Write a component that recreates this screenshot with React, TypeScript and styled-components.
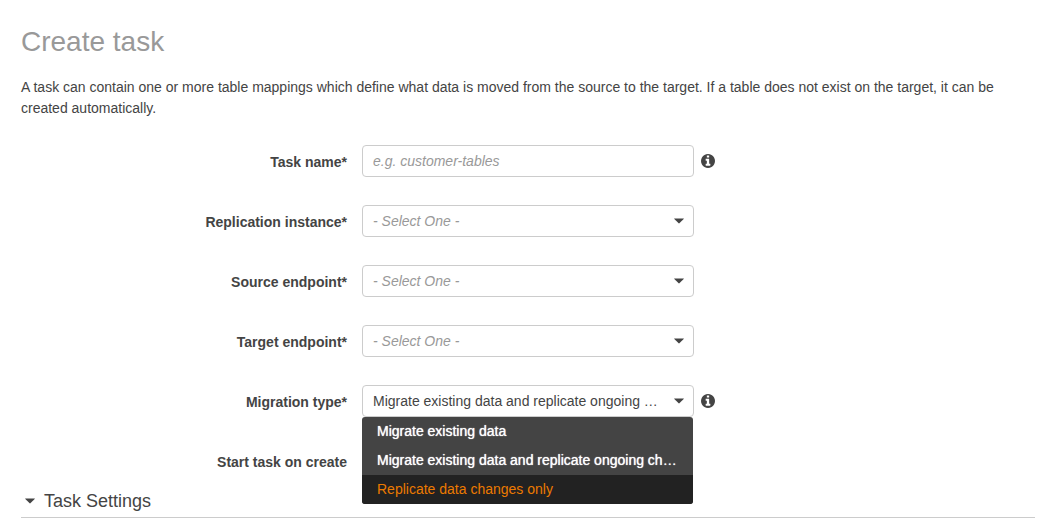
import React, { useState } from "react";
import styled, { createGlobalStyle } from "styled-components";

const GlobalStyle = createGlobalStyle`
  *, *::before, *::after { box-sizing: border-box; }
  body {
    margin: 0;
    background: #fff;
    color: #444;
    font: 14px/21px "Helvetica Neue", "Liberation Sans", Arial, sans-serif;
  }
`;

const Page = styled.main`
  padding: 24px 16px 14px 21px;
`;

const Title = styled.h1`
  margin: 0 0 18px;
  color: #999;
  font-size: 28px;
  font-weight: 400;
  line-height: 35px;
`;

const Intro = styled.p`
  margin: 0 0 26px;
`;

const Form = styled.form`
  display: grid;
  gap: 28px;
`;

const Row = styled.div`
  display: grid;
  grid-template-columns: 326px minmax(0, 332px) auto;
  justify-content: start;
  align-items: center;
  min-height: 32px;
`;

const Label = styled.label`
  padding-top: 2px;
  font-weight: 700;
  text-align: right;
`;

const Control = styled.div`
  position: relative;
  display: flex;
  align-items: center;
  margin: 0 -15px 0 15px;
`;

const fieldStyle = `
  width: 100%;
  height: 32px;
  margin: 0;
  border: 1px solid #ccc;
  border-radius: 4px;
  background: #fff;
  font: inherit;
  outline: none;
`;

const TextInput = styled.input`
  ${fieldStyle}
  padding: 0 10px;
  color: #444;
  &::placeholder {
    color: #999;
    font-style: italic;
    opacity: 1;
  }
`;

const Select = styled.select<{ $empty?: boolean }>`
  ${fieldStyle}
  appearance: none;
  padding: 0 30px 0 10px;
  overflow: hidden;
  white-space: nowrap;
  text-overflow: ellipsis;
  color: ${(p) => (p.$empty ? "#999" : "#444")};
  font-style: ${(p) => (p.$empty ? "italic" : "normal")};
`;

const SelectCaret = styled.span`
  position: absolute;
  right: 10px;
  top: 0;
  height: 32px;
  display: flex;
  align-items: center;
  pointer-events: none;
`;

const InfoButton = styled.button`
  display: flex;
  margin-left: 22px;
  padding: 0;
  border: 0;
  background: none;
  color: #444;
`;

const Menu = styled.ul`
  position: absolute;
  z-index: 1;
  top: 100%;
  left: 0;
  right: 1px;
  margin: 0;
  padding: 0;
  overflow: hidden;
  border-radius: 3px;
  background: #444;
  list-style: none;
`;

const MenuItem = styled.li<{ $active: boolean }>`
  padding: 4px 12px 4px 15px;
  overflow: hidden;
  white-space: nowrap;
  text-overflow: ellipsis;
  cursor: pointer;
  color: ${(p) => (p.$active ? "#ec7a00" : "#fff")};
  background: ${(p) => (p.$active ? "#222" : "transparent")};
  text-shadow: ${(p) => (p.$active ? "none" : "0 0 1px #fff")};
`;

const Checkbox = styled.input`
  margin: 0;
`;

const SectionHeading = styled.h2`
  margin: 12px 0 0;
  border-bottom: 1px solid #ccc;
  font-size: 18px;
  font-weight: 400;
  line-height: 24px;
`;

const SectionToggle = styled.button`
  display: flex;
  align-items: center;
  gap: 9px;
  padding: 0 0 4px 4px;
  border: 0;
  background: none;
  color: inherit;
  font: inherit;
`;

function Caret() {
  return (
    <svg width="10" height="6" viewBox="0 0 10 6" aria-hidden="true">
      <path d="M.5 .4h9q.6 0 .2.6L5.6 5.1q-.6.6-1.2 0L.3 1Q-.1.4.5.4z" fill="#444" />
    </svg>
  );
}

function Info({ about }: { about: string }) {
  return (
    <InfoButton type="button" aria-label={about}>
      <svg width="14" height="14" viewBox="128 128 1536 1536" aria-hidden="true">
        <path
          fill="currentColor"
          d="M1152 1376v-160q0-14-9-23t-23-9h-96v-512q0-14-9-23t-23-9h-320q-14 0-23 9t-9 23v160q0 14 9 23t23 9h96v320h-96q-14 0-23 9t-9 23v160q0 14 9 23t23 9h448q14 0 23-9t9-23zm-128-896v-160q0-14-9-23t-23-9h-192q-14 0-23 9t-9 23v160q0 14 9 23t23 9h192q14 0 23-9t9-23zm640 416q0 209-103 385.500t-279.500 279.500-385.500 103-385.500-103-279.500-279.500-103-385.500 103-385.500 279.500-279.500 385.500-103 385.500 103 279.500 279.500 103 385.500z"
        />
      </svg>
    </InfoButton>
  );
}

function EmptySelect({ id, label }: { id: string; label: string }) {
  return (
    <Row>
      <Label htmlFor={id}>{label}</Label>
      <Control>
        <Select id={id} $empty defaultValue="">
          <option value="">- Select One -</option>
        </Select>
        <SelectCaret>
          <Caret />
        </SelectCaret>
      </Control>
    </Row>
  );
}

const migrationTypes = [
  "Migrate existing data",
  "Migrate existing data and replicate ongoing changes",
  "Replicate data changes only",
];

export default function App() {
  const [type, setType] = useState(migrationTypes[1]);
  const [active, setActive] = useState(2);

  return (
    <>
      <GlobalStyle />
      <Page>
        <Title>Create task</Title>
        <Intro>
          A task can contain one or more table mappings which define what data is moved from the
          source to the target. If a table does not exist on the target, it can be created
          automatically.
        </Intro>
        <Form>
          <Row>
            <Label htmlFor="name">Task name*</Label>
            <Control>
              <TextInput id="name" type="text" placeholder="e.g. customer-tables" />
            </Control>
            <Info about="About task name" />
          </Row>
          <EmptySelect id="instance" label="Replication instance*" />
          <EmptySelect id="source" label="Source endpoint*" />
          <EmptySelect id="target" label="Target endpoint*" />
          <Row>
            <Label htmlFor="type">Migration type*</Label>
            <Control>
              <Select id="type" value={type} onChange={(e) => setType(e.target.value)}>
                {migrationTypes.map((t) => (
                  <option key={t}>{t}</option>
                ))}
              </Select>
              <SelectCaret>
                <Caret />
              </SelectCaret>
              <Menu role="listbox" aria-label="Migration type">
                {migrationTypes.map((t, i) => (
                  <MenuItem
                    key={t}
                    role="option"
                    aria-selected={t === type}
                    $active={i === active}
                    onMouseEnter={() => setActive(i)}
                    onClick={() => setType(t)}
                  >
                    {t}
                  </MenuItem>
                ))}
              </Menu>
            </Control>
            <Info about="About migration type" />
          </Row>
          <Row>
            <Label htmlFor="start">Start task on create</Label>
            <Control>
              <Checkbox id="start" type="checkbox" defaultChecked />
            </Control>
          </Row>
        </Form>
        <SectionHeading>
          <SectionToggle type="button" aria-expanded="true">
            <Caret />
            Task Settings
          </SectionToggle>
        </SectionHeading>
      </Page>
    </>
  );
}
